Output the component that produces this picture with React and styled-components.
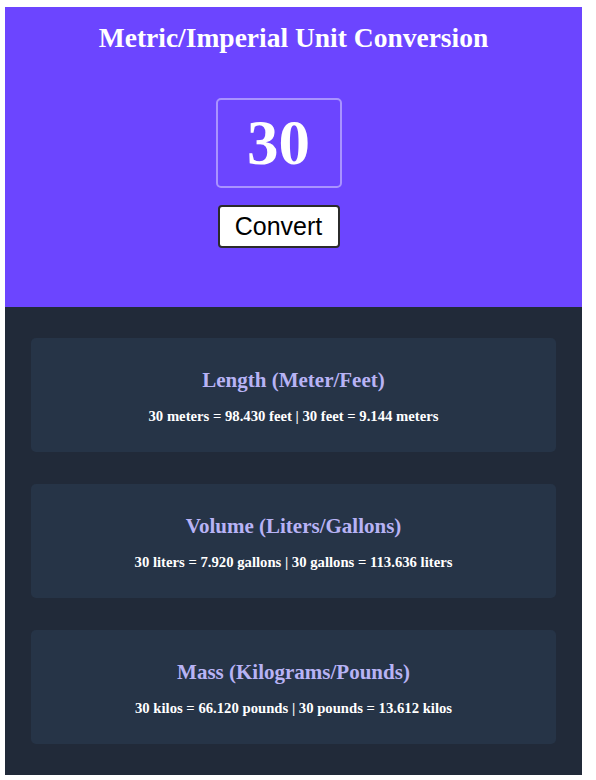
import React from "react";
import styled, { createGlobalStyle } from "styled-components";

const Global = createGlobalStyle`
  html, body { background: #ffffff; }
  body {
    margin: 7px 14px 0 5px;
    font-family: "Liberation Serif", "Times New Roman", serif;
  }
`;

const Page = styled.div`
  width: 577px;
  display: flex;
  flex-direction: column;
`;

const Header = styled.header`
  height: 300px;
  box-sizing: border-box;
  background: #6c45ff;
  display: flex;
  flex-direction: column;
  align-items: center;
  padding-top: 15px;
`;

const Title = styled.h1`
  margin: 0;
  font-size: 27.5px;
  line-height: 32px;
  font-weight: 700;
  color: #ffffff;
  text-align: center;
`;

const Controls = styled.div`
  margin-top: 44px;
  padding-right: 30px;
  display: flex;
  flex-direction: column;
  align-items: center;
  gap: 17px;
`;

const NumberInput = styled.input`
  width: 126px;
  height: 90px;
  box-sizing: border-box;
  background: transparent;
  border: 2px solid rgba(255, 255, 255, 0.42);
  border-radius: 5px;
  color: #ffffff;
  font-family: "Liberation Serif", "Times New Roman", serif;
  font-weight: 700;
  font-size: 63px;
  text-align: center;
  padding: 0;
  outline: none;
`;

const ConvertButton = styled.button`
  width: 122px;
  height: 43px;
  box-sizing: border-box;
  background: #ffffff;
  border: 2px solid #2b2b2b;
  border-radius: 4px;
  color: #000000;
  font-family: "Liberation Sans", Arial, sans-serif;
  font-size: 25px;
  padding: 0;
  cursor: pointer;
`;

const Results = styled.main`
  background: #212a39;
  padding: 31px 26px;
  display: flex;
  flex-direction: column;
  gap: 32px;
`;

const Card = styled.section`
  background: #263447;
  border-radius: 5px;
  padding: 30px 16px 28px;
  display: flex;
  flex-direction: column;
  align-items: center;
  gap: 16px;
`;

const CardTitle = styled.h2`
  margin: 0;
  font-size: 21px;
  line-height: 24px;
  font-weight: 700;
  color: #b8b3f5;
  text-align: center;
`;

const CardText = styled.p`
  margin: 0;
  font-size: 14.7px;
  line-height: 16px;
  font-weight: 700;
  color: #ffffff;
  text-align: center;
`;

const conversions = [
  {
    title: "Length (Meter/Feet)",
    text: "30 meters = 98.430 feet | 30 feet = 9.144 meters",
  },
  {
    title: "Volume (Liters/Gallons)",
    text: "30 liters = 7.920 gallons | 30 gallons = 113.636 liters",
  },
  {
    title: "Mass (Kilograms/Pounds)",
    text: "30 kilos = 66.120 pounds | 30 pounds = 13.612 kilos",
  },
];

export default function App() {
  return (
    <>
      <Global />
      <Page>
        <Header>
          <Title>Metric/Imperial Unit Conversion</Title>
          <Controls>
            <NumberInput type="text" defaultValue="30" />
            <ConvertButton>Convert</ConvertButton>
          </Controls>
        </Header>
        <Results>
          {conversions.map((c) => (
            <Card key={c.title}>
              <CardTitle>{c.title}</CardTitle>
              <CardText>{c.text}</CardText>
            </Card>
          ))}
        </Results>
      </Page>
    </>
  );
}
